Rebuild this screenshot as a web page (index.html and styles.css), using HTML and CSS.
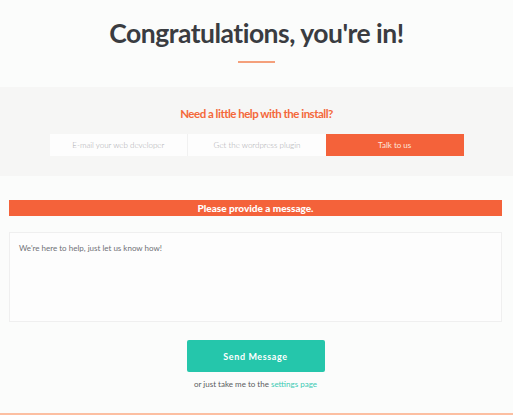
FILE: index.html
```html
<!DOCTYPE html>
<html>
<head>
<meta charset="utf-8">
<link rel="stylesheet" href="styles.css">
</head>
<body>
<div class="page">
  <header class="hero">
    <h1 class="title">Congratulations, you're in!</h1>
    <div class="divider"></div>
  </header>
  <section class="help">
    <h2 class="help-title">Need a little help with the install?</h2>
    <div class="tabs">
      <div class="tab">E-mail your web developer</div>
      <div class="tab">Get the wordpress plugin</div>
      <div class="tab active">Talk to us</div>
    </div>
  </section>
  <section class="contact">
    <div class="error">Please provide a message.</div>
    <div class="message">We're here to help, just let us know how!</div>
    <div class="actions">
      <button class="send">Send Message</button>
      <p class="skip">or just take me to the <a href="#" class="link">settings page</a></p>
    </div>
  </section>
  <div class="bottom-line"></div>
</div>
</body>
</html>
```

FILE: styles.css
```css
* { box-sizing: border-box; }
html, body { margin: 0; padding: 0; }
body {
  background: #fbfcfb;
  font-family: Lato, "Open Sans", sans-serif;
  width: 513px;
  height: 415px;
  overflow: hidden;
}
.page { display: flex; flex-direction: column; height: 415px; }
.hero {
  display: flex;
  flex-direction: column;
  align-items: center;
  padding-top: 16px;
  height: 87px;
}
.title {
  margin: 0;
  font-size: 26.5px;
  line-height: 34px;
  font-weight: 700;
  color: #3a3c41;
  letter-spacing: -0.5px;
}
.divider {
  width: 37px;
  height: 2px;
  background: #f4a07b;
  margin-top: 11px;
}
.help {
  background: #f6f6f5;
  height: 89px;
  display: flex;
  flex-direction: column;
  align-items: center;
  padding-top: 19px;
}
.help-title {
  margin: 0;
  font-size: 11.5px;
  line-height: 16px;
  font-weight: 700;
  color: #f4683a;
  letter-spacing: -0.5px;
}
.tabs {
  display: flex;
  width: 414px;
  margin-top: 12px;
}
.tab {
  flex: 1;
  height: 22px;
  display: flex;
  align-items: center;
  justify-content: center;
  font-size: 8px;
  font-weight: 300;
  color: #a9aaad;
  background: #fdfdfd;
}
.tab + .tab { border-left: 1px solid #f1f1f1; }
.tab.active {
  background: #f4623a;
  color: #fde6dc;
  font-weight: 400;
  border-left: none;
}
.contact {
  padding: 24px 11px 0 9px;
  display: flex;
  flex-direction: column;
}
.error {
  height: 16px;
  background: #f4623a;
  color: #fff;
  font-size: 10px;
  font-weight: 900;
  text-align: center;
  line-height: 16px;
}
.message {
  margin-top: 16px;
  height: 90px;
  background: #fdfdfd;
  border: 1px solid #efefef;
  padding: 10px 9px;
  font-size: 8px;
  color: #6f7176;
  font-weight: 400;
}
.actions {
  display: flex;
  flex-direction: column;
  align-items: center;
  padding-top: 18px;
}
.send {
  width: 138px;
  height: 32px;
  border: none;
  border-radius: 2px;
  background: #25c6ab;
  color: #fff;
  font-family: Lato, sans-serif;
  font-weight: 700;
  font-size: 9px;
  letter-spacing: 0.6px;
}
.skip {
  margin: 7px 0 0 0;
  font-size: 8px;
  color: #5a5c60;
  line-height: 10px;
}
.link { color: #3ccbb4; text-decoration: none; }
.bottom-line {
  margin-top: auto;
  height: 2px;
  background: #fcbfa2;
}
```
